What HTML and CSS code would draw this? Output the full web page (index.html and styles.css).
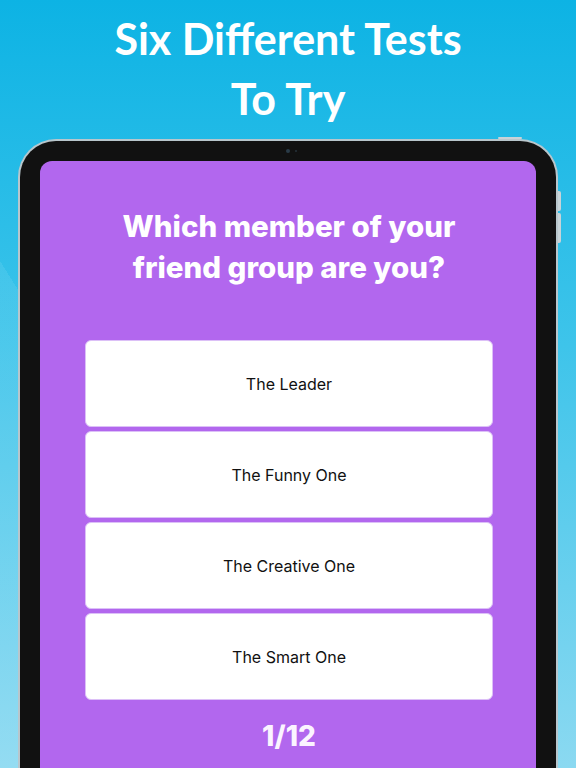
FILE: index.html
```html
<!DOCTYPE html>
<html lang="en">
<head>
    <meta charset="UTF-8">
    <meta name="viewport" content="width=device-width, initial-scale=1.0">
    <title>Six Different Tests To Try</title>
    <link rel="stylesheet" href="styles.css">
</head>
<body>
    <h1 class="headline">Six Different Tests<br>To Try</h1>

    <div class="tablet">
        <span class="camera"></span>
        <span class="sensor"></span>
        <span class="top-button"></span>
        <span class="side-button side-button-up"></span>
        <span class="side-button side-button-down"></span>

        <div class="screen">
            <h2 class="question">Which member of your<br>friend group are you?</h2>

            <div class="answers">
                <button class="answer">The Leader</button>
                <button class="answer">The Funny One</button>
                <button class="answer">The Creative One</button>
                <button class="answer">The Smart One</button>
            </div>

            <p class="progress">1/12</p>
        </div>
    </div>
</body>
</html>
```

FILE: styles.css
```css
html, body {
    height: 100%;
}

body {
    margin: 0;
    padding: 0;
    box-sizing: border-box;
    overflow: hidden;
    display: flex;
    flex-direction: column;
    font-family: Lato, "Open Sans", sans-serif;
    background:
        linear-gradient(58deg, rgba(255, 255, 255, 0.08) 0%, rgba(255, 255, 255, 0.08) 30%, rgba(255, 255, 255, 0) 30%),
        linear-gradient(180deg, #0db3e4 0%, #3ec4ea 45%, #8bd9f1 100%);
}

.headline {
    margin: 0;
    padding-top: 9px;
    color: #ffffff;
    font-size: 43px;
    font-weight: 700;
    line-height: 60px;
    text-align: center;
}

.tablet {
    position: relative;
    flex: 1;
    display: flex;
    margin: 10px 18px 0;
    padding: 20px 20px 0 20px;
    border: 2px solid #b8c6cc;
    border-bottom: none;
    border-radius: 38px 38px 0 0;
    background-color: #111111;
}

.camera {
    position: absolute;
    top: 8px;
    left: 266px;
    width: 4px;
    height: 4px;
    border-radius: 50%;
    background-color: #2a3b48;
}

.sensor {
    position: absolute;
    top: 9px;
    left: 275px;
    width: 2px;
    height: 2px;
    border-radius: 50%;
    background-color: #26323a;
}

.top-button {
    position: absolute;
    top: -4px;
    right: 34px;
    width: 24px;
    height: 2px;
    border-radius: 1px;
    background-color: #c8d3d8;
}

.side-button {
    position: absolute;
    right: -5px;
    width: 3px;
    border-radius: 0 2px 2px 0;
    background-color: #c8d3d8;
}

.side-button-up {
    top: 50px;
    height: 20px;
}

.side-button-down {
    top: 72px;
    height: 30px;
}

.screen {
    flex: 1;
    display: flex;
    flex-direction: column;
    padding: 45px 43px 0 45px;
    border-radius: 12px 12px 0 0;
    background-color: #b267ee;
}

.question {
    margin: 0;
    color: #ffffff;
    font-family: Inter, "Open Sans", sans-serif;
    font-size: 29.5px;
    font-weight: 800;
    line-height: 41px;
    text-align: center;
}

.answers {
    display: flex;
    flex-direction: column;
    gap: 4px;
    margin-top: 52px;
}

.answer {
    height: 87px;
    padding: 0;
    border: 1px solid #dcc0f7;
    border-radius: 6px;
    background-color: #ffffff;
    color: #111111;
    font-family: Inter, "Noto Sans", sans-serif;
    font-size: 16px;
    font-weight: 400;
    cursor: pointer;
}

.progress {
    margin: 20px 0 0;
    color: #fbf4ff;
    font-family: Inter, "Open Sans", sans-serif;
    font-size: 28px;
    font-weight: 800;
    line-height: 1.2;
    text-align: center;
}
```
